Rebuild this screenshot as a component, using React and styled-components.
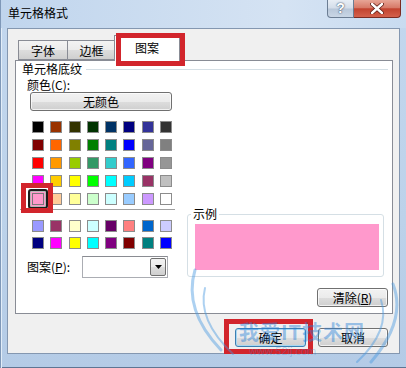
import React from "react";
import styled, { createGlobalStyle } from "styled-components";

const GlobalStyle = createGlobalStyle`
  html, body {
    margin: 0;
    padding: 0;
  }
  body {
    background: #bcd2ea;
    font-family: "Noto Sans CJK SC", "Liberation Sans", sans-serif;
    font-size: 12px;
    color: #000;
  }
`;

const standardColors = [
  ["#000000", "#993300", "#333300", "#003300", "#003366", "#000080", "#333399", "#333333"],
  ["#800000", "#FF6600", "#808000", "#008000", "#008080", "#0000FF", "#666699", "#808080"],
  ["#FF0000", "#FF9900", "#99CC00", "#339966", "#33CCCC", "#3366FF", "#800080", "#969696"],
  ["#FF00FF", "#FFCC00", "#FFFF00", "#00FF00", "#00FFFF", "#00CCFF", "#993366", "#C0C0C0"],
  ["#FF99CC", "#FFCC99", "#FFFF99", "#CCFFCC", "#CCFFFF", "#99CCFF", "#CC99FF", "#FFFFFF"],
];

const chartColors = [
  ["#9999FF", "#993366", "#FFFFCC", "#CCFFFF", "#660066", "#FF8080", "#0066CC", "#CCCCFF"],
  ["#000080", "#FF00FF", "#FFFF00", "#00FFFF", "#800080", "#800000", "#008080", "#0000FF"],
];

const App = () => {
  return (
    <>
      <GlobalStyle />
      <Window>
        <TitleBar>
          <Title>单元格格式</Title>
          <Caption>
            <HelpButton>?</HelpButton>
            <CloseButton>
              <svg width="14" height="11" viewBox="0 0 14 11">
                <path d="M2 1 L12 10 M12 1 L2 10" stroke="#5a1a12" strokeWidth="4" strokeLinecap="round" />
                <path d="M2 1 L12 10 M12 1 L2 10" stroke="#fff" strokeWidth="2.4" strokeLinecap="round" />
              </svg>
            </CloseButton>
          </Caption>
        </TitleBar>

        <Client>
          <Tabs>
            <Tab $first>字体</Tab>
            <Tab>边框</Tab>
            <Tab $active>
              图案
              <Mark $top={-3} $left={1} $w={69} $h={33} />
            </Tab>
          </Tabs>

          <Panel>
            <GroupHead>
              <span>单元格底纹</span>
              <Rule />
            </GroupHead>
            <Body>
              <LeftCol>
                <FieldLabel $mt={2}>颜色(C):</FieldLabel>
                <WideButton>无颜色</WideButton>
                <SwatchGrid $mt={10}>
                  {standardColors.flat().map((c, i) => (
                    <Swatch key={i} $color={c} $selected={i === 32}>
                      {i === 32 && <Mark $top={-11} $left={-12} $w={32} $h={30} />}
                    </Swatch>
                  ))}
                </SwatchGrid>
                <Separator />
                <SwatchGrid $mt={10}>
                  {chartColors.flat().map((c, i) => (
                    <Swatch key={i} $color={c} />
                  ))}
                </SwatchGrid>
                <PatternRow>
                  <FieldLabel>
                    图案(<u>P</u>):
                  </FieldLabel>
                  <Select>
                    <DropButton>
                      <svg width="7" height="4" viewBox="0 0 7 4">
                        <path d="M0 0 H7 L3.5 4 Z" fill="#000" />
                      </svg>
                    </DropButton>
                  </Select>
                </PatternRow>
              </LeftCol>

              <RightCol>
                <Sample>
                  <SampleLegend>示例</SampleLegend>
                  <Preview $color="#FF99CC" />
                </Sample>
                <Button $w={71} $mt={11}>
                  清除(<u>R</u>)
                </Button>
              </RightCol>
            </Body>
          </Panel>

          <Footer>
            <Button $w={71} $default>
              确定
              <Mark $top={-10} $left={-12} $w={89} $h={35} />
            </Button>
            <Button $w={70}>取消</Button>
          </Footer>
        </Client>

        <Watermark>
          <svg width="226" height="120" viewBox="0 0 226 120">
            <g fill="none" stroke="#4a9ae0" strokeOpacity="0.45" strokeLinecap="round">
              <path d="M14 20 Q2 60 40 100" strokeWidth="3" />
              <path d="M24 38 Q16 70 52 104" strokeWidth="2" />
              <path d="M212 34 Q226 70 190 112" strokeWidth="3" />
              <path d="M200 50 Q210 80 176 112" strokeWidth="2" />
            </g>
          </svg>
          <MarkText>我爱IT技术网</MarkText>
          <MarkUrl>www.52ij.com</MarkUrl>
        </Watermark>
      </Window>
    </>
  );
};

const Window = styled.div`
  position: relative;
  width: 406px;
  height: 368px;
  box-sizing: border-box;
  display: flex;
  flex-direction: column;
  overflow: hidden;
  background: linear-gradient(to bottom, #c3d7ee 0%, #bcd2ea 60%, #b4cbe6 100%);
  border-left: 1px solid #7f98b8;
  box-shadow: inset 1px 0 0 #e2edf8, inset 0 -1px 0 #5e7593;
`;

const TitleBar = styled.div`
  height: 28px;
  display: flex;
  align-items: flex-start;
  padding-left: 7px;
  background: linear-gradient(to right, #c0d5ed, #d5e3f3 70%, #c8dbf0);
`;

const Title = styled.div`
  margin-top: 6px;
  line-height: 14px;
  color: #000;
`;

const Caption = styled.div`
  margin-left: auto;
  margin-right: 5px;
  display: flex;
`;

const HelpButton = styled.div`
  width: 27px;
  height: 18px;
  box-sizing: border-box;
  border: 1px solid #6b7d93;
  border-top: none;
  border-radius: 0 0 0 4px;
  background: linear-gradient(to bottom, #e8eef5 0%, #d3dde9 48%, #b8c7d9 52%, #c9d6e5 100%);
  color: #fff;
  font-family: "Liberation Sans", sans-serif;
  font-weight: bold;
  font-size: 14px;
  line-height: 17px;
  text-align: center;
  text-shadow: 0 0 2px #40536b, 0 0 1px #40536b;
`;

const CloseButton = styled.div`
  width: 47px;
  height: 18px;
  box-sizing: border-box;
  border: 1px solid #7a2b22;
  border-top: none;
  border-left: none;
  border-radius: 0 0 4px 0;
  background: linear-gradient(to bottom, #e7a596 0%, #d77a68 45%, #c2432f 52%, #d4604b 100%);
  display: flex;
  align-items: center;
  justify-content: center;
`;

const Client = styled.div`
  height: 326px;
  box-sizing: border-box;
  margin: 0 6px 0 6px;
  padding: 6px 6px 0 7px;
  background: #f0f0f0;
  border: 1px solid #8497b0;
  display: flex;
  flex-direction: column;
`;

const Tabs = styled.div`
  display: flex;
  align-items: flex-end;
  margin-left: 3px;
  margin-bottom: -1px;
  position: relative;
  z-index: 1;
`;

const Tab = styled.div`
  position: relative;
  box-sizing: border-box;
  width: ${(p) => (p.$active ? "66px" : p.$first ? "50px" : "49px")};
  height: ${(p) => (p.$active ? "26px" : "20px")};
  margin-left: ${(p) => (p.$active ? "-2px" : p.$first ? "0" : "-1px")};
  margin-bottom: ${(p) => (p.$active ? "0" : "1px")};
  border: 1px solid #898c95;
  border-bottom: ${(p) => (p.$active ? "none" : "1px solid #898c95")};
  background: ${(p) =>
    p.$active ? "#fff" : "linear-gradient(to bottom, #f3f3f3 0%, #ebebeb 50%, #dddddd 51%, #cfcfcf 100%)"};
  line-height: ${(p) => (p.$active ? "24px" : "18px")};
  padding-top: ${(p) => (p.$active ? "0" : "1px")};
  text-align: center;
  color: #000;
`;

const Mark = styled.span`
  position: absolute;
  top: ${(p) => p.$top}px;
  left: ${(p) => p.$left}px;
  width: ${(p) => p.$w}px;
  height: ${(p) => p.$h}px;
  box-sizing: border-box;
  border: 5px solid #d2252c;
  pointer-events: none;
  z-index: 5;
`;

const Panel = styled.div`
  height: 254px;
  box-sizing: border-box;
  background: #fff;
  border: 1px solid #898c95;
  display: flex;
  flex-direction: column;
`;

const GroupHead = styled.div`
  display: flex;
  align-items: center;
  margin-top: 1px;
  padding-left: 6px;
  line-height: 14px;
`;

const Rule = styled.div`
  flex: 1;
  height: 1px;
  margin: 0 4px 0 4px;
  background: #d5dfe5;
`;

const Body = styled.div`
  display: flex;
`;

const LeftCol = styled.div`
  width: 160px;
  display: flex;
  flex-direction: column;
`;

const FieldLabel = styled.div`
  margin-top: ${(p) => p.$mt || 0}px;
  padding-left: 11px;
  line-height: 14px;
  u {
    text-decoration-thickness: 1px;
    text-underline-offset: 1px;
  }
`;

const buttonFace = `
  box-sizing: border-box;
  border: 1px solid #707070;
  border-radius: 3px;
  background: linear-gradient(to bottom, #f2f2f2 0%, #ebebeb 50%, #dddddd 51%, #cfcfcf 100%);
  box-shadow: inset 0 0 0 1px rgba(255, 255, 255, 0.7);
  text-align: center;
  color: #000;
`;

const WideButton = styled.div`
  ${buttonFace}
  width: 142px;
  height: 19px;
  margin-left: 14px;
  line-height: 17px;
`;

const SwatchGrid = styled.div`
  display: grid;
  grid-template-columns: repeat(8, 12px);
  grid-auto-rows: 12px;
  column-gap: 6.3px;
  row-gap: 5.9px;
  margin-top: ${(p) => p.$mt}px;
  margin-left: 16px;
`;

const Swatch = styled.div`
  position: relative;
  box-sizing: border-box;
  width: 12px;
  height: 12px;
  border: 1px solid #8c8c8c;
  background: ${(p) => p.$color};

  ${(p) =>
    p.$selected &&
    `
    border-color: #7a7a7a;
    box-shadow: 0 0 0 1px ${p.$color}, 0 0 0 2px #b8b8b8;
    &::before {
      content: "";
      position: absolute;
      inset: -5px;
      border: 2px solid #1c1c1c;
      border-radius: 3px;
      pointer-events: none;
    }
  `}
`;

const Separator = styled.div`
  width: 155px;
  height: 1px;
  margin: 4px 0 0 4px;
  background: #a0a0a0;
`;

const PatternRow = styled.div`
  margin-top: 7px;
  height: 22px;
  display: flex;
  align-items: center;
  justify-content: space-between;
  padding-right: 8px;
`;

const Select = styled.div`
  position: relative;
  box-sizing: border-box;
  width: 86px;
  height: 22px;
  border: 1px solid #abadb3;
  border-top-color: #8a8c92;
  background: #fff;
  display: flex;
  justify-content: flex-end;
  padding: 1px;
`;

const DropButton = styled.div`
  box-sizing: border-box;
  width: 16px;
  height: 100%;
  border: 1px solid #707070;
  border-radius: 2px;
  background: linear-gradient(to bottom, #f2f2f2 0%, #ebebeb 50%, #dddddd 51%, #cfcfcf 100%);
  display: flex;
  align-items: center;
  justify-content: center;
`;

const RightCol = styled.div`
  flex: 1;
  margin-left: 11px;
  padding: 131px 4px 0 0;
  display: flex;
  flex-direction: column;
  align-items: flex-end;
`;

const Sample = styled.fieldset`
  align-self: stretch;
  margin: 0 4px 0 0;
  padding: 3px 4px 6px 7px;
  border: 1px solid #d5dfe5;
  border-radius: 3px;
  min-width: 0;
`;

const SampleLegend = styled.legend`
  margin-left: -4px;
  padding: 0 2px;
  line-height: 14px;
`;

const Preview = styled.div`
  height: 46px;
  background: ${(p) => p.$color};
`;

const Button = styled.div`
  ${buttonFace}
  position: relative;
  width: ${(p) => p.$w}px;
  height: 19px;
  margin-top: ${(p) => p.$mt || 0}px;
  line-height: 17px;
  ${(p) =>
    p.$default &&
    `
    border-color: #3c7fb1;
    box-shadow: inset 0 0 0 1px #a6d8f4;
  `}
  u {
    text-decoration-thickness: 1px;
    text-underline-offset: 1px;
  }
`;

const Footer = styled.div`
  display: flex;
  justify-content: flex-end;
  gap: 12px;
  margin-top: 14px;
  margin-right: 5px;
`;

const Watermark = styled.div`
  position: absolute;
  left: 180px;
  top: 250px;
  width: 226px;
  height: 118px;
  pointer-events: none;
  z-index: 10;
  svg {
    position: absolute;
    left: 0;
    top: 0;
  }
`;

const MarkText = styled.div`
  position: absolute;
  left: 58px;
  top: 70px;
  font-size: 20px;
  font-weight: bold;
  letter-spacing: 1px;
  line-height: 24px;
  color: rgba(40, 128, 215, 0.45);
  white-space: nowrap;
`;

const MarkUrl = styled.div`
  position: absolute;
  left: 68px;
  top: 95px;
  font-family: "Liberation Sans", sans-serif;
  font-size: 11px;
  line-height: 12px;
  color: rgba(40, 128, 215, 0.3);
`;

export default App;
